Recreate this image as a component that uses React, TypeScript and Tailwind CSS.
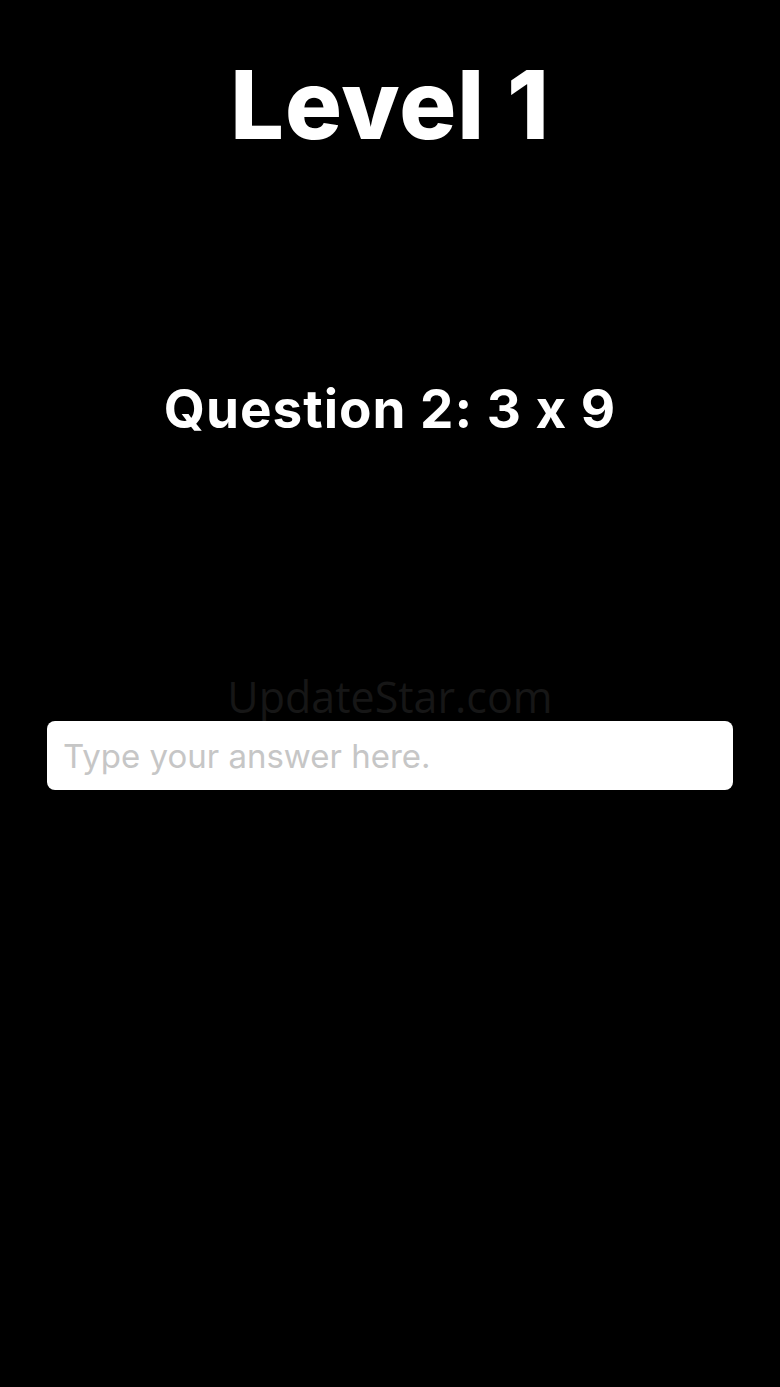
export default function App() {
  return (
    <div className="w-[780px] h-[1387px] bg-black flex flex-col items-center [font-feature-settings:'calt'_0]" style={{ fontFamily: "Inter, 'Liberation Sans', sans-serif" }}>
      <h1 className="mt-[52px] text-[95px] leading-[106px] font-extrabold text-white tracking-[1px]">Level 1</h1>
      <h2 className="mt-[219px] text-[53px] leading-[64px] font-bold text-white tracking-[1px]">Question 2: 3 x 9</h2>
      <div className="mt-[229px] h-[54px] text-[43px] leading-[54px] text-[#161616]" style={{ fontFamily: "'Open Sans', 'DejaVu Sans', sans-serif" }}>
        UpdateStar.com
      </div>
      <input
        type="text"
        placeholder="Type your answer here."
        className="mt-[-3px] w-[686px] h-[69px] bg-white rounded-[8px] px-4 text-[33px] text-black placeholder:text-[#c6c6c6] outline-none"
      />
    </div>
  );
}
